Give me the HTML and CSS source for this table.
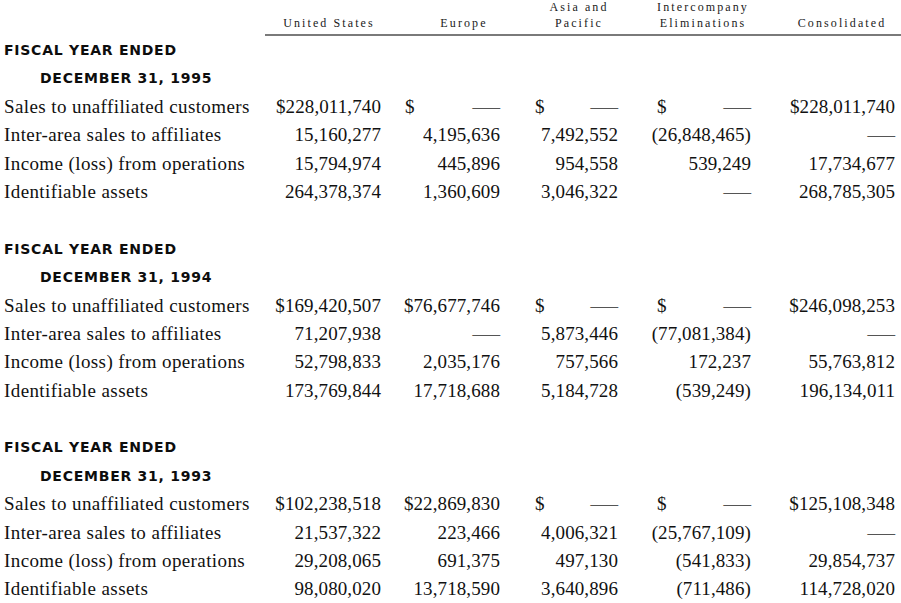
FILE: index.html
```html
<!DOCTYPE html>
<html>
<head>
<meta charset="utf-8">
<link rel="stylesheet" href="styles.css">
</head>
<body>
<div class="sheet">
  <div class="head">
    <div class="hcell"></div>
    <div class="hcell">United States</div>
    <div class="hcell">Europe</div>
    <div class="hcell">Asia and<br>Pacific</div>
    <div class="hcell">Intercompany<br>Eliminations</div>
    <div class="hcell">Consolidated</div>
  </div>

  <div class="row title"><div class="t1">FISCAL YEAR ENDED</div></div>
  <div class="row title"><div class="t2">DECEMBER 31, 1995</div></div>
  <div class="row">
    <div class="label">Sales to unaffiliated customers</div>
    <div class="num us">$228,011,740</div>
    <div class="num eu"><span>$</span><span class="dash">—</span></div>
    <div class="num ap"><span>$</span><span class="dash">—</span></div>
    <div class="num ic"><span>$</span><span class="dash">—</span></div>
    <div class="num co">$228,011,740</div>
  </div>
  <div class="row">
    <div class="label">Inter-area sales to affiliates</div>
    <div class="num us">15,160,277</div>
    <div class="num eu">4,195,636</div>
    <div class="num ap">7,492,552</div>
    <div class="num ic">(26,848,465)</div>
    <div class="num co"><span class="dash">—</span></div>
  </div>
  <div class="row">
    <div class="label">Income (loss) from operations</div>
    <div class="num us">15,794,974</div>
    <div class="num eu">445,896</div>
    <div class="num ap">954,558</div>
    <div class="num ic">539,249</div>
    <div class="num co">17,734,677</div>
  </div>
  <div class="row">
    <div class="label">Identifiable assets</div>
    <div class="num us">264,378,374</div>
    <div class="num eu">1,360,609</div>
    <div class="num ap">3,046,322</div>
    <div class="num ic"><span class="dash">—</span></div>
    <div class="num co">268,785,305</div>
  </div>
  <div class="row blank"></div>

  <div class="row title"><div class="t1">FISCAL YEAR ENDED</div></div>
  <div class="row title"><div class="t2">DECEMBER 31, 1994</div></div>
  <div class="row">
    <div class="label">Sales to unaffiliated customers</div>
    <div class="num us">$169,420,507</div>
    <div class="num eu">$76,677,746</div>
    <div class="num ap"><span>$</span><span class="dash">—</span></div>
    <div class="num ic"><span>$</span><span class="dash">—</span></div>
    <div class="num co">$246,098,253</div>
  </div>
  <div class="row">
    <div class="label">Inter-area sales to affiliates</div>
    <div class="num us">71,207,938</div>
    <div class="num eu"><span class="dash">—</span></div>
    <div class="num ap">5,873,446</div>
    <div class="num ic">(77,081,384)</div>
    <div class="num co"><span class="dash">—</span></div>
  </div>
  <div class="row">
    <div class="label">Income (loss) from operations</div>
    <div class="num us">52,798,833</div>
    <div class="num eu">2,035,176</div>
    <div class="num ap">757,566</div>
    <div class="num ic">172,237</div>
    <div class="num co">55,763,812</div>
  </div>
  <div class="row">
    <div class="label">Identifiable assets</div>
    <div class="num us">173,769,844</div>
    <div class="num eu">17,718,688</div>
    <div class="num ap">5,184,728</div>
    <div class="num ic">(539,249)</div>
    <div class="num co">196,134,011</div>
  </div>
  <div class="row blank"></div>

  <div class="row title"><div class="t1">FISCAL YEAR ENDED</div></div>
  <div class="row title"><div class="t2">DECEMBER 31, 1993</div></div>
  <div class="row">
    <div class="label">Sales to unaffiliated customers</div>
    <div class="num us">$102,238,518</div>
    <div class="num eu">$22,869,830</div>
    <div class="num ap"><span>$</span><span class="dash">—</span></div>
    <div class="num ic"><span>$</span><span class="dash">—</span></div>
    <div class="num co">$125,108,348</div>
  </div>
  <div class="row">
    <div class="label">Inter-area sales to affiliates</div>
    <div class="num us">21,537,322</div>
    <div class="num eu">223,466</div>
    <div class="num ap">4,006,321</div>
    <div class="num ic">(25,767,109)</div>
    <div class="num co"><span class="dash">—</span></div>
  </div>
  <div class="row">
    <div class="label">Income (loss) from operations</div>
    <div class="num us">29,208,065</div>
    <div class="num eu">691,375</div>
    <div class="num ap">497,130</div>
    <div class="num ic">(541,833)</div>
    <div class="num co">29,854,737</div>
  </div>
  <div class="row">
    <div class="label">Identifiable assets</div>
    <div class="num us">98,080,020</div>
    <div class="num eu">13,718,590</div>
    <div class="num ap">3,640,896</div>
    <div class="num ic">(711,486)</div>
    <div class="num co">114,728,020</div>
  </div>
</div>
</body>
</html>
```

FILE: styles.css
```css
html, body {
  margin: 0;
  padding: 0;
  background: #ffffff;
}
body {
  font-family: "Liberation Serif", "Times New Roman", serif;
  color: #111111;
}
.sheet {
  width: 901px;
}
.head,
.row {
  display: grid;
  grid-template-columns: 265px 128px 142px 88px 160px 118px;
}
.head {
  height: 34px;
  align-items: end;
  position: relative;
  margin-bottom: 2px;
}
.head::after {
  content: "";
  position: absolute;
  left: 265px;
  right: 0;
  bottom: -2px;
  height: 2px;
  background: #7a7a7a;
}
.hcell {
  text-align: center;
  font-size: 12px;
  letter-spacing: 2.1px;
  line-height: 15.5px;
  padding-bottom: 5px;
  color: #1a1a1a;
}
.row {
  height: 28.4px;
  font-size: 19px;
  line-height: 28.4px;
  align-items: center;
}
.label {
  padding-left: 4px;
  white-space: nowrap;
  letter-spacing: 0.4px;
}
.num {
  display: flex;
  justify-content: flex-end;
  white-space: nowrap;
  letter-spacing: 0.1px;
}
.num span:first-child:not(:last-child) {
  margin-right: auto;
}
.us { padding-right: 12px; }
.eu { padding-left: 12px; padding-right: 35px; }
.ap { padding-left: 0; padding-right: 5px; }
.ic { padding-left: 34px; padding-right: 32px; }
.co { padding-right: 6px; }
.dash {
  display: inline-block;
  color: #555;
  transform: scaleX(1.45);
  transform-origin: right center;
}
.title {
  display: block;
  font-family: "DejaVu Sans", "Liberation Sans", sans-serif;
  font-weight: 800;
  font-size: 14px;
  letter-spacing: 0.75px;
  color: #0d0d0d;
}
.t1 { padding-left: 4px; }
.t2 { padding-left: 40px; }
```
